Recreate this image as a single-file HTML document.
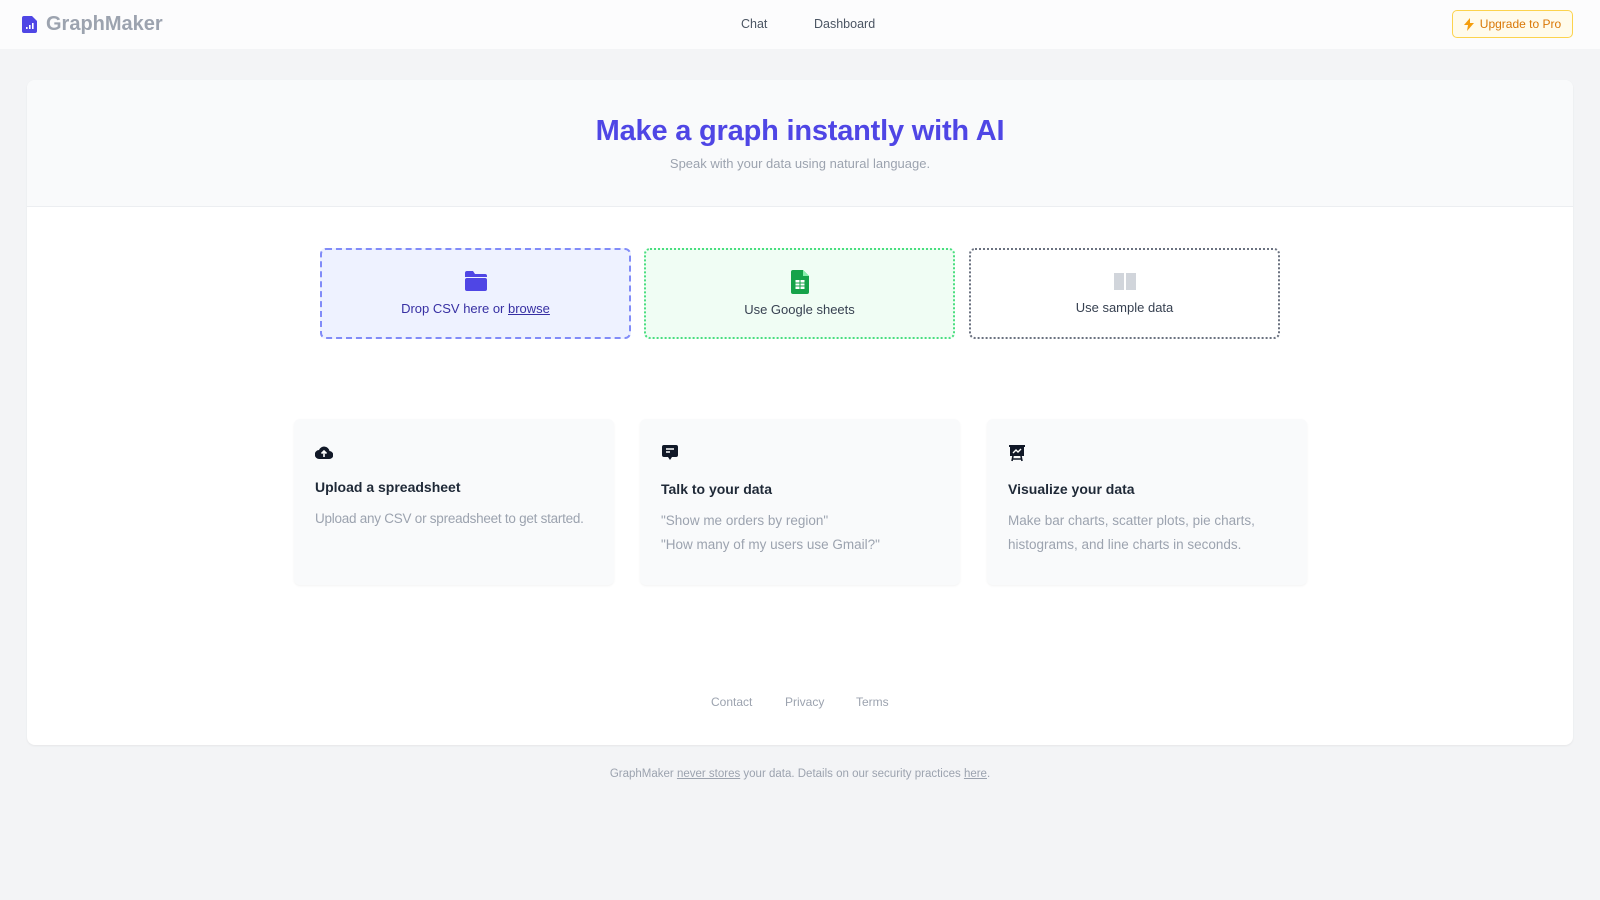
<!DOCTYPE html>
<html><head><meta charset="utf-8"><style>
*{box-sizing:border-box;margin:0;padding:0}
body{width:1600px;height:900px;background:#f3f4f6;font-family:"Liberation Sans",Arial,sans-serif;position:relative;overflow:hidden}
.nav{position:absolute;left:0;top:0;width:1600px;height:49px;background:#fcfcfd}
.logo{position:absolute;left:22px;top:13px;display:flex;align-items:center;gap:9px;font-size:20px;font-weight:bold;color:#9ca3af}
.navl{position:absolute;top:17px;font-size:12.5px;color:#4b5563}
.up{position:absolute;left:1452px;top:10px;width:121px;height:28px;border:1px solid #fcd34d;background:#fffbeb;border-radius:5px;color:#d97706;font-size:12px;display:flex;align-items:center;justify-content:center;gap:6px}
.card{position:absolute;left:27px;top:80px;width:1546px;height:665px;background:#fff;border-radius:8px;box-shadow:0 1px 2px rgba(0,0,0,.06);overflow:hidden}
.hd{height:127px;background:#f9fafb;border-bottom:1px solid #eceef1;text-align:center}
.hd h1{padding-top:35px;font-size:29px;color:#4f46e5;font-weight:bold;letter-spacing:-0.2px}
.hd p{margin-top:8px;font-size:13px;color:#9ca3af}
.box{position:absolute;top:168px;width:311px;height:91px;border-radius:6px;display:flex;flex-direction:column;align-items:center;justify-content:center;font-size:13px;color:#374151}
.feat{position:absolute;top:339px;width:320px;height:166px;background:#f9fafb;border-radius:6px;box-shadow:0 1px 2px rgba(0,0,0,.05);padding:25px 10px 25px 21px}
.feat h3{font-size:14px;color:#1f2937;margin-top:14px}
.feat p{font-size:13.5px;color:#9ca3af;line-height:23.5px;margin-top:12px}
.fl{position:absolute;top:615px;font-size:12px;color:#9ca3af}
.bt{position:absolute;top:768px;left:0;width:1600px;text-align:center;font-size:11.5px;color:#9ca3af}
.bt u{text-decoration:underline}
</style></head><body>
<div class="nav">
 <div class="logo"><svg width="15" height="17" viewBox="0 0 15 17"><path d="M2 0h8l5 5v10a2 2 0 0 1-2 2H2a2 2 0 0 1-2-2V2a2 2 0 0 1 2-2z" fill="#4f46e5"/><rect x="4" y="11" width="1.6" height="2" fill="#fff"/><rect x="7" y="9" width="1.6" height="4" fill="#fff"/><rect x="10" y="7" width="1.6" height="6" fill="#fff"/></svg>GraphMaker</div>
 <div class="navl" style="left:741px">Chat</div>
 <div class="navl" style="left:814px">Dashboard</div>
 <div class="up"><svg width="10" height="13" viewBox="0 0 10 13"><path d="M6 0L0 7h4l-1 6 7-8H6z" fill="#f59e0b"/></svg>Upgrade to Pro</div>
</div>
<div class="card">
 <div class="hd"><h1>Make a graph instantly with AI</h1><p>Speak with your data using natural language.</p></div>
 <div class="box" style="left:293px;background:#eef2ff;border:2px dashed #818cf8;color:#3730a3">
  <svg width="22" height="20" viewBox="0 0 22 20"><path d="M0 2a2 2 0 0 1 2-2h6l2 3h10a2 2 0 0 1 2 2v1H0z" fill="#4f46e5"/><rect x="0" y="7" width="22" height="13" rx="2" fill="#4f46e5"/></svg>
  <div style="margin-top:10px">Drop CSV here or <u>browse</u></div></div>
 <div class="box" style="left:617px;background:#f0fdf4;border:2px dotted #4ade80">
  <svg width="18" height="24" viewBox="0 0 18 24"><path d="M2 0h10l6 6v16a2 2 0 0 1-2 2H2a2 2 0 0 1-2-2V2a2 2 0 0 1 2-2z" fill="#16a34a"/><path d="M12 0v6h6z" fill="#86efac"/><rect x="4.5" y="10" width="9" height="9" fill="#fff"/><path d="M4.5 13h9M4.5 16h9M9 10v9" stroke="#16a34a" stroke-width="1"/></svg>
  <div style="margin-top:8px">Use Google sheets</div></div>
 <div class="box" style="left:942px;background:#fff;border:2px dotted #6b7280">
  <svg width="22" height="18" viewBox="0 0 22 18"><path d="M0 1h10v17H0zM12 1h10v17H12z" fill="#d1d5db"/></svg>
  <div style="margin-top:10px">Use sample data</div></div>
 <div class="feat" style="left:267px"><svg width="18" height="16" viewBox="0 0 18 16"><path d="M4.5 15A4.5 4.5 0 0 1 4 6a5.5 5.5 0 0 1 10.5 1A4 4 0 0 1 14 15z" fill="#111827"/><path d="M9 13V7M6.5 9.5L9 7l2.5 2.5" stroke="#fff" stroke-width="1.6" fill="none"/></svg>
  <h3>Upload a spreadsheet</h3><p style="letter-spacing:-0.25px">Upload any CSV or spreadsheet to get started.</p></div>
 <div class="feat" style="left:613px"><svg width="18" height="18" viewBox="0 0 18 18"><path d="M3 1h12a2 2 0 0 1 2 2v8a2 2 0 0 1-2 2h-4l-2 3-2-3H3a2 2 0 0 1-2-2V3a2 2 0 0 1 2-2z" fill="#111827"/><path d="M5 5h8M5 8h4" stroke="#fff" stroke-width="1.6"/></svg>
  <h3>Talk to your data</h3><p>"Show me orders by region"<br>"How many of my users use Gmail?"</p></div>
 <div class="feat" style="left:960px"><svg width="18" height="18" viewBox="0 0 18 18"><rect x="1" y="1" width="16" height="2" fill="#111827"/><rect x="2" y="2" width="14" height="10" fill="#111827"/><path d="M5 9l3-3 2 2 3-3" stroke="#fff" stroke-width="1.4" fill="none"/><path d="M5 12l-1 5M13 12l1 5M4 15h10" stroke="#111827" stroke-width="1.6"/></svg>
  <h3>Visualize your data</h3><p>Make bar charts, scatter plots, pie charts, histograms, and line charts in seconds.</p></div>
 <div class="fl" style="left:684px">Contact</div>
 <div class="fl" style="left:758px">Privacy</div>
 <div class="fl" style="left:829px">Terms</div>
</div>
<div class="bt">GraphMaker <u>never stores</u> your data. Details on our security practices <u>here</u>.</div>
</body></html>
